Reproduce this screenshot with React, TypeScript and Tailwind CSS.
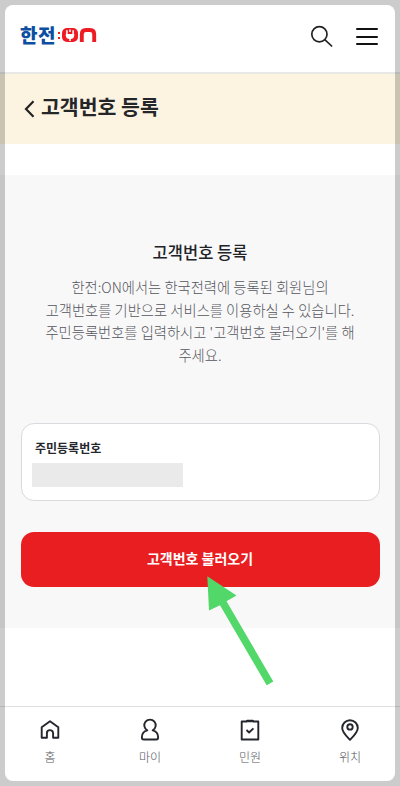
import React from "react";

const sans = "font-['Noto_Sans_CJK_KR','Noto_Sans',sans-serif]";

function Logo() {
  return (
    <div className="mb-[2px] flex h-[16px] items-center" aria-label="한전:ON">
      <span className="w-[37px] whitespace-nowrap text-[19px] leading-[16px] font-black tracking-[0.5px] text-[#0b4ea2]">
        한전
      </span>
      <span className="ml-[1px] flex w-[2px] flex-col gap-[3px]">
        <i className="h-[2px] w-[2px] bg-[#ed1c24]" />
        <i className="h-[2px] w-[2px] bg-[#ed1c24]" />
      </span>
      <svg className="ml-[2px]" width="35" height="16" viewBox="0 0 35 16" fill="none">
        <rect x="0" y="1" width="16" height="14" rx="5" fill="#ed1c24" />
        <path d="M3.800 7h8.400v1.600c0 2.200-1.600 3.600-4.200 3.600S3.800 10.800 3.800 8.600z" fill="#fff" />
        <path d="M4.900 3.200v4.300M11.100 3.200v4.300M8 2.600v2.400M8 12v2" stroke="#fff" strokeWidth="1.500" />
        <path d="M19.800 15V7.200c0-2.700 1.500-4.200 4.200-4.200h4c2.700 0 4.200 1.500 4.200 4.200V15" stroke="#ed1c24" strokeWidth="3.900" />
      </svg>
    </div>
  );
}

function NavItem({ label, children }: { label: string; children: React.ReactNode }) {
  return (
    <a className="flex flex-1 flex-col items-center pt-[11px]">
      <svg width="24" height="24" viewBox="0 0 24 24" fill="none" stroke="#25262d" strokeWidth="1.900" strokeLinejoin="round">
        {children}
      </svg>
      <span className="mt-[6px] text-[12px] leading-[18px] font-light text-[#55565c]">{label}</span>
    </a>
  );
}

export default function App() {
  return (
    <div className={`relative flex h-[786px] w-[400px] flex-col overflow-hidden bg-white ${sans}`}>
      <header className="flex h-[74px] shrink-0 items-center justify-between border-b-2 border-[#e8e8e6] pr-[22px] pl-[20px]">
        <Logo />
        <div className="flex items-center gap-[22px]">
          <svg width="24" height="24" viewBox="0 0 24 24" fill="none" stroke="#222" strokeWidth="1.700">
            <circle cx="9.400" cy="10.200" r="7.600" />
            <path d="M14.800 15.600l7.300 6.900" />
          </svg>
          <div className="mt-px flex w-[22px] flex-col gap-[5.500px]">
            <i className="h-[2px] rounded bg-[#111]" />
            <i className="h-[2px] rounded bg-[#111]" />
            <i className="h-[2px] rounded bg-[#111]" />
          </div>
        </div>
      </header>

      <div className="flex h-[70px] shrink-0 items-center bg-[#fcf4e0] pb-[6px] pl-[24px]">
        <svg className="mt-[5px]" width="11" height="18" viewBox="0 0 11 18" fill="none" stroke="#222" strokeWidth="2.200">
          <path d="M9.500 1.200L2 9l7.500 7.800" />
        </svg>
        <h1 className="ml-[6px] text-[20.500px] leading-[30px] font-bold text-[#25262a]">고객번호 등록</h1>
      </div>

      <main className="mt-[31px] h-[453px] shrink-0 bg-[#f8f8f8] px-[20.500px] pt-[65px]">
        <h2 className="text-center text-[16.500px] leading-[24px] font-medium text-[#222329]">고객번호 등록</h2>
        <p className="mt-[12px] text-center text-[14.300px] leading-[22.700px] font-light whitespace-nowrap text-[#55565e]">
          한전:ON에서는 한국전력에 등록된 회원님의
          <br />
          고객번호를 기반으로 서비스를 이용하실 수 있습니다.
          <br />
          주민등록번호를 입력하시고 '고객번호 불러오기'를 해
          <br />
          주세요.
        </p>
        <section className="mt-[56px] h-[78px] rounded-[13px] border border-[#d9dade] bg-white pt-[14px] pl-[10.500px]">
          <label className="ml-[3px] block text-[12px] leading-[20px] font-bold text-[#25262c]">주민등록번호</label>
          <div className="mt-[5px] h-[24px] w-[151px] bg-[#eaeaea]" />
        </section>
        <button className="mt-[31px] block h-[55px] w-full rounded-[13px] bg-[#e81e20] pb-[2px] text-[14px] font-bold text-white">
          고객번호 불러오기
        </button>
      </main>

      <nav className="mt-auto flex h-[80px] shrink-0 border-t border-[#dfe0e2]">
        <NavItem label="홈">
          <path d="M3.700 19.800V9.200L12 3.200l8.300 6v10.600h-5.200v-4.600a3.100 3.100 0 0 0-6.200 0v4.600z" />
        </NavItem>
        <NavItem label="마이">
          <path d="M9.300 12.300a5.700 5.700 0 1 1 5.400 0c3.300.9 5.400 3.700 5.400 6.700v.8c0 1.200-.8 1.700-1.800 1.700H5.700c-1 0-1.800-.5-1.800-1.700V19c0-3 2.100-5.800 5.400-6.700z" />
        </NavItem>
        <NavItem label="민원">
          <path d="M3.700 3.500h4.600l.9-.9h5.600l.9.900h4.600v18H3.700z" />
          <path d="M8.500 3.500h7" strokeWidth="1.500" />
          <path d="M8.500 12l2.600 2.500 4.300-4.100" />
        </NavItem>
        <NavItem label="위치">
          <path d="M12 21.800C7.800 17.500 4.200 14.300 4.200 10a7.800 7.800 0 0 1 15.600 0c0 4.300-3.600 7.500-7.800 11.800z" />
          <circle cx="12" cy="8.900" r="2.700" />
        </NavItem>
      </nav>

      <svg className="pointer-events-none absolute top-[574px] left-[204px]" width="72" height="114" viewBox="0 0 72 114">
        <path d="M3.300 2.200L32.500 21.400 22.500 27.200 69.300 107.500 62.700 111.300 16 31.200 5 36.500z" fill="#52d769" />
      </svg>
      <div className="pointer-events-none absolute inset-[5px] rounded-[8px] shadow-[0_0_0_20px_rgba(0,0,0,0.200)]" />
    </div>
  );
}
